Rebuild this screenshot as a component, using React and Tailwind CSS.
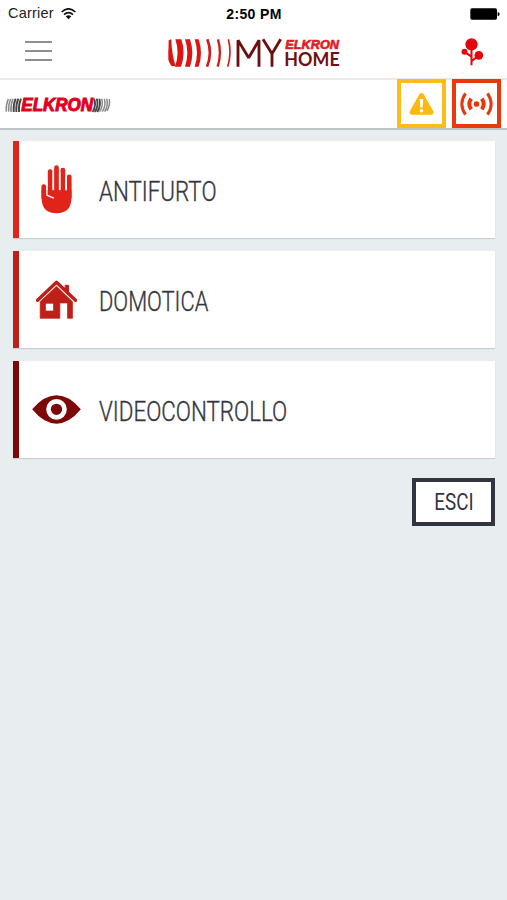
import React from "react";

function WifiIcon() {
  return (
    <svg viewBox="0 0 45 36" className="w-[15px] h-3" fill="none" stroke="#111">
      <path d="M2 12 Q22.500 -7 43 12" strokeWidth="5" />
      <path d="M9 20 Q22.500 8 36 20" strokeWidth="5" />
      <path d="M14 25 Q22.500 18 31 25 L22.500 34 Z" fill="#111" stroke="none" />
    </svg>
  );
}

function BatteryIcon() {
  return (
    <svg viewBox="0 0 90 36" className="w-[30px] h-3">
      <rect x="1" y="1" width="80" height="34" rx="5" fill="#000" />
      <path d="M83 12 Q89 13 89 18 T83 25 Z" fill="#000" />
    </svg>
  );
}

function MainLogo() {
  return (
    <svg viewBox="21 36 522 96" className="w-[174px] h-8 overflow-visible">
      <g fill="#dd1414">
        <path d="M25 46 Q24 94 40 122 Q29 119 25 104 Z" />
        <path d="M26 46 L34 43 Q35 88 47 124 L34 123 Q25 114 26 46 Z" />
        <path d="M46 43 H64 Q78 84 63 125 H45 Q60 84 46 43 Z" />
        <path d="M75 43 H90 Q104 84 90 125 H75 Q89 84 75 43 Z" />
        <path d="M104 43 H116 Q130 84 116 125 H104 Q118 84 104 43 Z" />
      </g>
      <g fill="none" stroke="#cf1d1d">
        <path d="M142 43 Q158 84 141 125" strokeWidth="8" />
        <path d="M174 43 Q186 84 173 125" strokeWidth="7" />
        <path d="M205 43 Q216 84 203 125" strokeWidth="5" />
      </g>
      <g fill="none" stroke="#6b1010" strokeWidth="8.500" strokeLinejoin="bevel">
        <path d="M234 125 V46 L266 98 L297 46 V125" />
        <path d="M309 43 L336 86 L362 43 M336 84 V125" />
      </g>
      <text
        x="376" y="71" fontSize="37" fontWeight="700" fontStyle="italic" fontFamily="Liberation Sans, sans-serif"
        fill="#e31b23" stroke="#e31b23" strokeWidth="2" textLength="161" lengthAdjust="spacingAndGlyphs"
      >
        ELKRON
      </text>
      <text
        x="373" y="124" fontSize="56" fontWeight="700" fontFamily="Lato, sans-serif"
        fill="#701010" textLength="166" lengthAdjust="spacingAndGlyphs"
      >
        HOME
      </text>
    </svg>
  );
}

function TreeIcon() {
  return (
    <svg viewBox="242 115 68 84" className="w-[23px] h-7" fill="#e5050f">
      <circle cx="273" cy="134" r="18.500" />
      <circle cx="252" cy="156" r="9" />
      <circle cx="295" cy="167" r="13" />
      <path d="M273 148 V197 M254 158 L273 171 M293 168 L274 184" stroke="#e5050f" strokeWidth="6" fill="none" />
    </svg>
  );
}

function ElkronLogo() {
  return (
    <svg viewBox="15 50 318 48" className="w-[106px] h-4 overflow-visible">
      <g fill="none" stroke="#8a8a8a" strokeWidth="4.500">
        <path d="M25 56 Q17 74 19 94 M32 55 Q24 74 26 94 M39 55 Q31 74 33 95" />
        <path d="M305 55 Q311 74 299 94 M313 55 Q319 74 307 94 M320 55 Q326 74 314 94 M328 56 Q331 74 321 92" />
      </g>
      <g fill="none" stroke="#444" strokeWidth="5.500">
        <path d="M47 55 Q39 74 41 95 M55 55 Q47 74 49 95 M63 55 Q55 74 57 95" />
        <path d="M282 55 Q290 74 278 95 M290 55 Q297 74 285 95 M298 55 Q304 74 292 95" />
      </g>
      <text
        x="64" y="93" fontSize="53" fontWeight="700" fontStyle="italic" fontFamily="Liberation Sans, sans-serif"
        fill="#e2001f" stroke="#e2001f" strokeWidth="3" textLength="215" lengthAdjust="spacingAndGlyphs"
      >
        ELKRON
      </text>
    </svg>
  );
}

function WarningIcon() {
  return (
    <svg viewBox="87 276 75 67" className="w-[25px] h-[22px]">
      <path d="M118 280 Q124 272 131 280 L160 331 Q164 341 154 342 H95 Q85 341 89 331 Z" fill="#fab90f" />
      <path d="M119 294 H130 L128 320 H121 Z" fill="#fff" />
      <circle cx="124.500" cy="330" r="5.500" fill="#fff" />
    </svg>
  );
}

function SignalIcon() {
  return (
    <svg viewBox="240 277 98 72" className="w-[33px] h-6" fill="none" stroke="#e8380d">
      <circle cx="289" cy="313" r="8.500" fill="#e8380d" stroke="none" />
      <path d="M273 297 Q262 313 273 329 M305 297 Q316 313 305 329" strokeWidth="12" />
      <path d="M256 281 Q234 313 256 345 M322 281 Q344 313 322 345" strokeWidth="9" />
    </svg>
  );
}

function HandIcon() {
  return (
    <svg viewBox="122 94 92 146" className="w-[31px] h-[49px]">
      <g stroke="#e2231a" strokeWidth="14" strokeLinecap="round">
        <path d="M130 158 V190 M149 114 V190 M168 102 V190 M187 109 V190 M206 129 V190" />
      </g>
      <path d="M123.500 168 H212.500 V194 Q211 238 168 238 Q125 238 123.500 194 Z" fill="#e2231a" />
      <path d="M139.500 140 V184 L160 193 M158.500 115 V169 M177.500 115 V169 M196.500 128 V170" stroke="#fff" strokeWidth="4" fill="none" />
    </svg>
  );
}

function HouseIcon() {
  return (
    <svg viewBox="107 106 122 117" className="w-[41px] h-[39px]">
      <path d="M194 122 H204 V150 L194 140 Z" fill="#be1f17" stroke="#be1f17" strokeWidth="3" />
      <path d="M111 167 L168 113 L225 167" fill="none" stroke="#be1f17" strokeWidth="10" strokeLinecap="round" strokeLinejoin="round" />
      <path d="M168 125 L216 171 V221 H201 V175 H178 V221 H119 V171 Z" fill="#be1f17" stroke="#be1f17" strokeWidth="2" strokeLinejoin="round" />
      <rect x="136" y="177" width="22" height="21" fill="#fff" />
    </svg>
  );
}

function EyeIcon() {
  return (
    <svg viewBox="95 119 146 87" className="w-[49px] h-[29px]">
      <path d="M95 162 Q130 120 168 120 Q206 120 241 162 Q206 205 168 205 Q130 205 95 162 Z" fill="#7d0808" />
      <circle cx="168" cy="162" r="24" fill="none" stroke="#fff" strokeWidth="14" />
    </svg>
  );
}

function MenuCard({ border, icon, label, scale }) {
  return (
    <button className={`flex items-center h-[97px] w-full bg-white border-l-[6px] shadow-[0_1px_1px_#c8cdd1] ${border}`}>
      <span className="flex justify-center w-[74px] shrink-0">{icon}</span>
      <span className={`ml-1.5 mt-1 origin-left text-[27.5px] leading-8 font-light whitespace-nowrap [-webkit-text-stroke:0.35px_#34363f] ${scale}`}>{label}</span>
    </button>
  );
}

export default function App() {
  return (
    <div className="min-h-screen bg-[#e8edf0] text-[#34363f] font-[Roboto,sans-serif]">

      {/* STATUS BAR */}
      <div className="grid grid-cols-3 items-center h-[27px] pl-2 pr-[7px] bg-white text-black font-['Liberation_Sans',sans-serif]">
        <div className="flex items-center gap-[7px] text-[14.5px]">
          <span className="pt-px text-[#222] tracking-[0.2px]">Carrier</span>
          <WifiIcon />
        </div>
        <span className="text-center text-sm font-bold tracking-[0.35px]">2:50 PM</span>
        <div className="flex justify-end">
          <BatteryIcon />
        </div>
      </div>

      {/* NAVBAR */}
      <nav className="grid grid-cols-[1fr_174px_1fr] items-center h-[53px] bg-white border-b-2 border-[#ebebeb]">
        <button className="flex flex-col gap-[7px] w-[27px] ml-[25px] -mt-1">
          <span className="h-0.5 bg-[#8f8f8f]" />
          <span className="h-0.5 bg-[#8f8f8f]" />
          <span className="h-0.5 bg-[#8f8f8f]" />
        </button>
        <MainLogo />
        <button className="justify-self-end mr-[23px] -mt-0.5">
          <TreeIcon />
        </button>
      </nav>

      {/* BRAND + ALERTS */}
      <div className="flex items-end justify-between h-[50px] pl-[5px] pr-1.5 bg-white border-b-2 border-[#c1c4c6]">
        <div className="mb-[15px]">
          <ElkronLogo />
        </div>
        <div className="flex gap-1.5 -mt-px">
          <button className="flex items-center justify-center size-[49px] bg-white border-4 border-[#fdbd18]">
            <WarningIcon />
          </button>
          <button className="flex items-center justify-center size-[49px] bg-white border-4 border-[#e8380d]">
            <SignalIcon />
          </button>
        </div>
      </div>

      {/* MENU */}
      <main className="flex flex-col gap-[13px] pt-[11px] pl-[13px] pr-3">
        <MenuCard border="border-[#e2231a]" icon={<HandIcon />} label="ANTIFURTO" scale="scale-x-[0.812]" />
        <MenuCard border="border-[#be1f17]" icon={<HouseIcon />} label="DOMOTICA" scale="scale-x-[0.795]" />
        <MenuCard border="border-[#7d0808]" icon={<EyeIcon />} label="VIDEOCONTROLLO" scale="scale-x-[0.813]" />

        <button className="self-end flex items-center justify-center w-[83px] h-12 mt-[7px] bg-white border-4 border-[#303540]">
          <span className="pt-0.5 text-[23px] scale-x-[0.82]">ESCI</span>
        </button>
      </main>

    </div>
  );
}
